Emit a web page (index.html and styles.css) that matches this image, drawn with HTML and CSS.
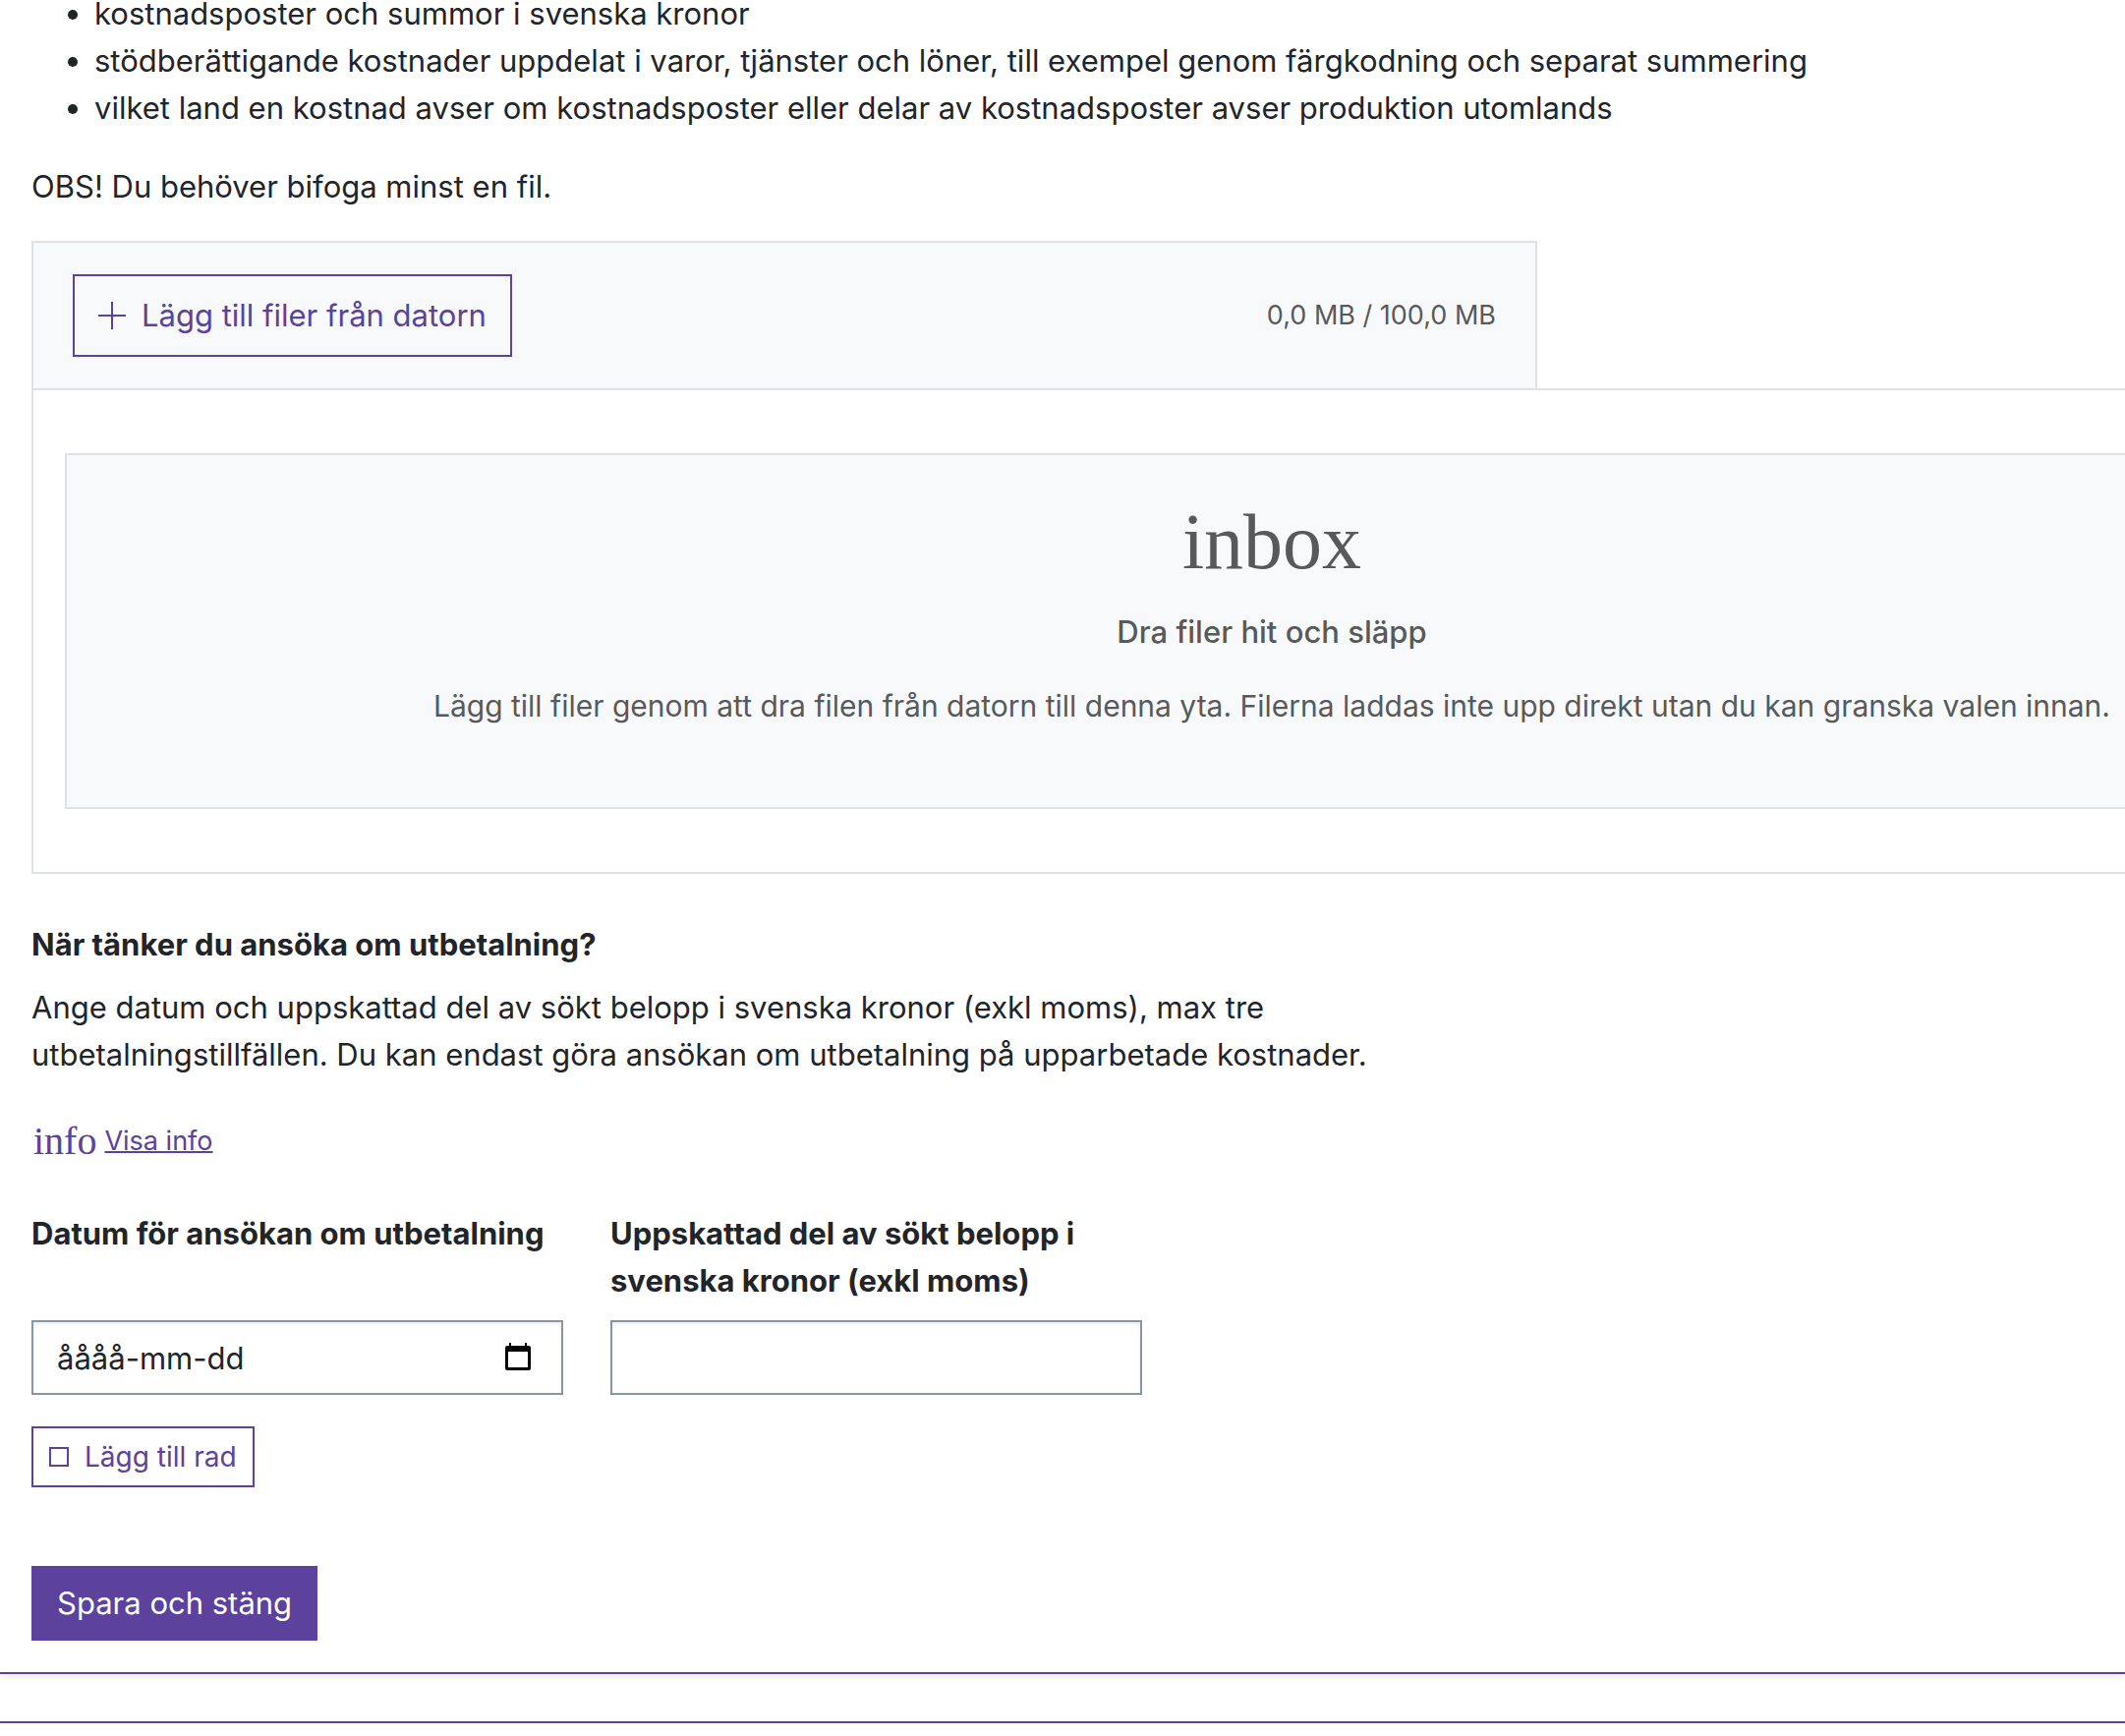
FILE: index.html
```html
<!DOCTYPE html>
<html lang="sv">
<head>
    <meta charset="UTF-8" />
    <meta name="viewport" content="width=device-width, initial-scale=1.0" />
    <title>Kostnader och utbetalning</title>
    <link rel="stylesheet" href="styles.css">
</head>
<body>

<main class="form-card">
    <ul class="requirements">
        <li>kostnadsposter och summor i svenska kronor</li>
        <li>stödberättigande kostnader uppdelat i varor, tjänster och löner, till exempel genom färgkodning och separat summering</li>
        <li>vilket land en kostnad avser om kostnadsposter eller delar av kostnadsposter avser produktion utomlands</li>
    </ul>
    <p class="note">OBS! Du behöver bifoga minst en fil.</p>

    <!-- File upload -->
    <section class="upload">
        <div class="upload-header">
            <button type="button" class="btn btn-outline btn-add-file">
                <svg class="plus-icon" viewBox="0 0 28 28" aria-hidden="true">
                    <path d="M14 0v28M0 14h28" />
                </svg>
                Lägg till filer från datorn
            </button>
            <span class="upload-size">0,0 MB / 100,0 MB</span>
        </div>
        <div class="upload-body">
            <div class="dropzone">
                <div class="dropzone-icon">inbox</div>
                <div class="dropzone-title">Dra filer hit och släpp</div>
                <div class="dropzone-text">Lägg till filer genom att dra filen från datorn till denna yta. Filerna laddas inte upp direkt utan du kan granska valen innan.</div>
            </div>
        </div>
    </section>

    <!-- Payout -->
    <section class="payout">
        <h2>När tänker du ansöka om utbetalning?</h2>
        <p class="payout-text">Ange datum och uppskattad del av sökt belopp i svenska kronor (exkl moms), max tre utbetalningstillfällen. Du kan endast göra ansökan om utbetalning på upparbetade kostnader.</p>
        <div class="info-row">
            <span class="info-icon">info</span>
            <a href="#">Visa info</a>
        </div>
        <div class="fields">
            <div class="field">
                <label for="payoutDate">Datum för ansökan om utbetalning</label>
                <div class="date-wrap">
                    <input type="text" id="payoutDate" placeholder="åååå-mm-dd">
                    <svg class="calendar-icon" viewBox="0 0 26 28" aria-hidden="true">
                        <path fill-rule="evenodd" d="M4 0h2v3h14V0h2v3h2a2 2 0 0 1 2 2v21a2 2 0 0 1-2 2H2a2 2 0 0 1-2-2V5a2 2 0 0 1 2-2h2zM3 9v16h20V9z" />
                    </svg>
                </div>
            </div>
            <div class="field">
                <label for="payoutAmount">Uppskattad del av sökt belopp i svenska kronor (exkl moms)</label>
                <input type="text" id="payoutAmount">
            </div>
        </div>
        <button type="button" class="btn btn-outline btn-add-row">
            <span class="square-icon"></span>
            Lägg till rad
        </button>
    </section>

    <button type="submit" class="btn btn-save">Spara och stäng</button>
</main>

<div class="next-card"></div>

</body>
</html>
```

FILE: styles.css
```css
* {
    box-sizing: border-box;
}
body {
    margin: 0;
    overflow: hidden;
    font-family: Inter, "Liberation Sans", sans-serif;
    font-size: 31px;
    line-height: 48px;
    color: #212529;
    background-color: #fff;
}
h2, p, ul {
    margin: 0;
}
.form-card {
    margin-top: -10px;
    padding: 0 32px 32px;
    border-bottom: 2px solid #5c419d;
    box-shadow: 0 4px 8px rgba(0, 0, 0, 0.075);
}
.requirements {
    padding-left: 64px;
    margin-bottom: 32px;
}
.note {
    margin-bottom: 31px;
}

/* Buttons */
.btn {
    display: flex;
    align-items: center;
    font-family: inherit;
    font-size: 31px;
    line-height: 48px;
    border: 2px solid #5c419d;
    cursor: pointer;
}
.btn-outline {
    color: #5c419d;
    background-color: transparent;
}
.btn-add-file {
    gap: 16px;
    padding: 16px 24px;
}
.btn-add-row {
    gap: 16px;
    padding: 8px 16px;
    font-size: 28px;
    line-height: 42px;
}
.btn-save {
    padding: 12px 24px;
    color: #fff;
    background-color: #5c419d;
}
.plus-icon {
    width: 28px;
    height: 28px;
    stroke: #5c419d;
    stroke-width: 2;
}
.square-icon {
    width: 20px;
    height: 20px;
    border: 2px solid #5c419d;
}

/* Upload */
.upload {
    margin-bottom: 48px;
}
.upload-header {
    display: flex;
    justify-content: space-between;
    align-items: center;
    max-width: 1532px;
    padding: 32px 40px;
    border: 2px solid #dee2e6;
    border-bottom: none;
    background-color: #f8f9fb;
}
.upload-size {
    font-size: 27px;
    color: #58595b;
}
/* wider than the card on purpose, runs out to the right */
.upload-body {
    width: calc(100% + 426px);
    padding: 64px 32px;
    border: 2px solid #dee2e6;
}
.dropzone {
    padding: 40px 32px 79px;
    border: 2px solid #dee2e6;
    background-color: #f8f9fb;
    color: #58595b;
    text-align: center;
}
.dropzone-icon {
    margin-bottom: 20px;
    font-family: "Liberation Serif", serif;
    font-size: 80px;
    line-height: 96px;
}
.dropzone-title {
    margin-bottom: 27px;
    font-weight: 500;
}
.dropzone-text {
    font-size: 30px;
}

/* Payout */
.payout {
    margin-bottom: 80px;
}
.payout h2 {
    margin-bottom: 16px;
    font-size: 31px;
    line-height: 48px;
    font-weight: 700;
}
.payout-text {
    max-width: 1400px;
    margin-bottom: 40px;
}
.info-row {
    display: flex;
    align-items: center;
    gap: 8px;
    margin-bottom: 46px;
    padding-left: 2px;
    font-size: 27px;
    color: #5c419d;
}
.info-row a {
    color: #5c419d;
    text-decoration-thickness: 2px;
}
.info-icon {
    font-family: "Liberation Serif", serif;
    font-size: 40px;
}
.fields {
    display: grid;
    grid-template-columns: 1fr 1fr;
    gap: 48px;
    max-width: 1130px;
    margin-bottom: 32px;
}
.field {
    display: flex;
    flex-direction: column;
    justify-content: space-between;
    gap: 16px;
}
.field label {
    font-weight: 700;
}
.field input {
    display: block;
    width: 100%;
    height: 76px;
    padding: 12px 24px;
    font-family: inherit;
    font-size: 31px;
    color: #212529;
    border: 2px solid #8796a0;
    border-radius: 0;
    background-color: #fff;
    box-shadow: inset 0 2px 4px rgba(0, 0, 0, 0.075);
}
.field input::placeholder {
    color: #212529;
}
.date-wrap {
    position: relative;
}
.calendar-icon {
    position: absolute;
    top: 23px;
    right: 33px;
    width: 26px;
    height: 28px;
    fill: #000;
}
.next-card {
    margin-top: 48px;
    border-top: 2px solid #5c419d;
}
```
